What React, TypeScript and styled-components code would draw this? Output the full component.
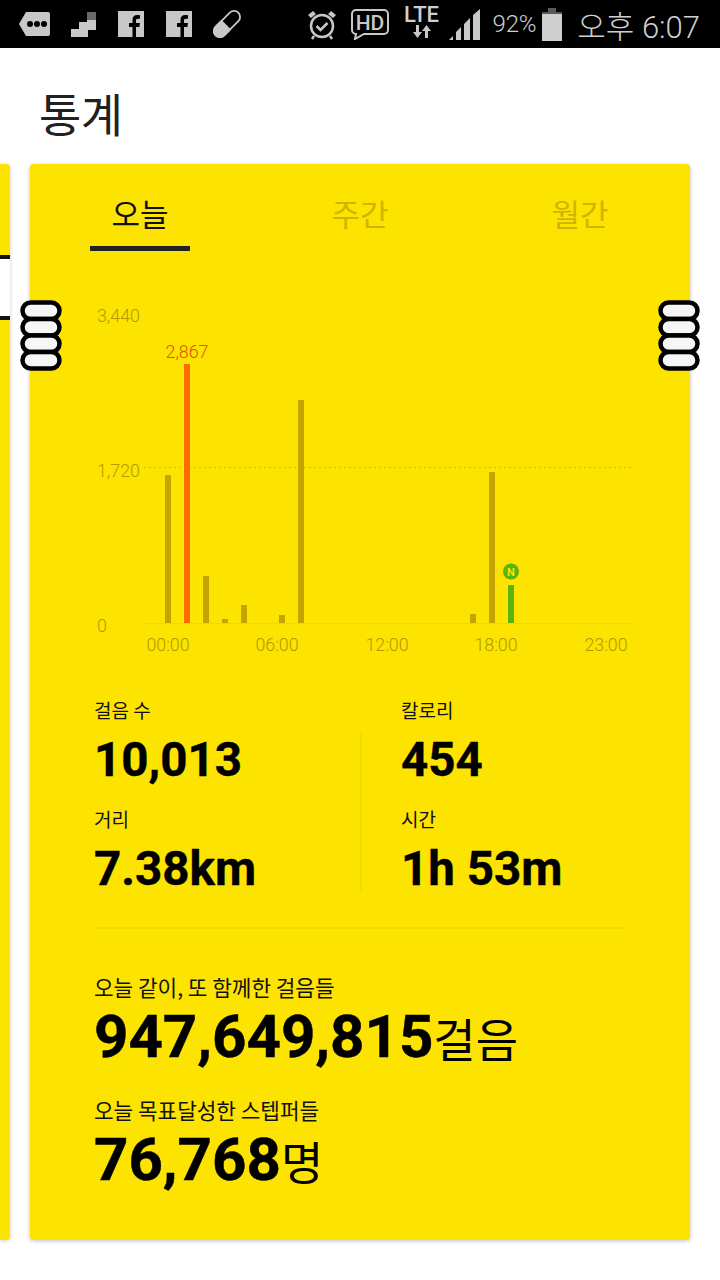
import React from 'react';
import styled, { createGlobalStyle } from 'styled-components';

const YELLOW = '#fce300';
const MUTED = '#c4a500';
const KR = '"Noto Sans CJK KR", "Noto Sans", sans-serif';

const GlobalStyle = createGlobalStyle`
  html, body {
    margin: 0;
    padding: 0;
    background: #ffffff;
  }
  body {
    width: 720px;
    height: 1280px;
    overflow: hidden;
    font-family: Roboto, ${KR};
  }
`;

const Page = styled.div`
  position: relative;
  width: 720px;
  height: 1280px;
  background: #ffffff;
  overflow: hidden;
`;

const StatusBar = styled.div`
  height: 48px;
  background: #000000;
  display: flex;
  align-items: center;
  justify-content: space-between;
  padding: 0 20px 0 19px;
  color: #cfcfcf;
`;

const StatusGroup = styled.div`
  display: flex;
  align-items: center;
`;

const BatteryText = styled.span`
  font: 300 24px Roboto, sans-serif;
  margin: 0 6px 0 12px;
  letter-spacing: -0.2px;
`;

const ClockText = styled.span`
  font: 300 31px Roboto, ${KR};
  margin-left: 15px;
  white-space: nowrap;
`;

const LteBox = styled.div`
  display: flex;
  flex-direction: column;
  align-items: center;
  width: 36px;
  margin-left: 15px;
  margin-right: 9px;
`;

const LteText = styled.span`
  font: 500 22px/18px Roboto, sans-serif;
  margin-top: -3px;
`;

const Title = styled.h1`
  margin: 0;
  height: 116px;
  padding: 32px 0 0 39px;
  box-sizing: border-box;
  font: 400 46px/64px ${KR};
  color: #212121;
  letter-spacing: -0.5px;
`;

const Carousel = styled.div`
  display: flex;
  gap: 20px;
`;

const PeekCard = styled.div`
  width: 10px;
  height: 1076px;
  background: ${YELLOW};
  border-radius: 0 4px 4px 0;
  box-shadow: 0 1px 4px rgba(0, 0, 0, 0.2);
  padding-top: 91px;
  box-sizing: border-box;
`;

const PeekInset = styled.div`
  height: 65px;
  box-sizing: border-box;
  background: #ffffff;
  border-top: 4px solid #111;
  border-bottom: 4px solid #111;
`;

const Card = styled.main`
  width: 660px;
  height: 1076px;
  background: ${YELLOW};
  border-radius: 4px;
  box-shadow: 0 1px 4px rgba(0, 0, 0, 0.25);
`;

const Tabs = styled.div`
  display: flex;
  justify-content: space-between;
  padding: 0 60px;
  height: 87px;
`;

const Tab = styled.div<{ $active?: boolean }>`
  width: 100px;
  height: 87px;
  box-sizing: border-box;
  padding-top: 24px;
  text-align: center;
  font: 400 31px/50px ${KR};
  color: ${(p) => (p.$active ? '#111' : '#d0b400')};
  border-bottom: 5px solid ${(p) => (p.$active ? '#222' : 'transparent')};
`;

const ChartSvg = styled.svg`
  display: block;
  width: 660px;
  height: 400px;
  margin-top: 19px;
`;

const StatsGrid = styled.section`
  margin: 26px 63px 0 64px;
  display: grid;
  grid-template-columns: 266px 1fr;
  height: 231px;
  border-bottom: 2px solid #f3da00;
`;

const StatsColumn = styled.div<{ $divider?: boolean }>`
  padding-left: ${(p) => (p.$divider ? '41px' : '0')};
  position: relative;

  &::before {
    content: '';
    display: ${(p) => (p.$divider ? 'block' : 'none')};
    position: absolute;
    left: 0;
    top: 37px;
    height: 158px;
    width: 2px;
    background: #f3da00;
  }
`;

const Stat = styled.div`
  height: 109px;
`;

const Label = styled.div`
  font: 400 19px/28px ${KR};
  color: #111;
`;

const TotalLabel = styled.div`
  font: 400 21.3px/30px ${KR};
  color: #111;
  margin-top: -1px;
`;

const StatValue = styled.div`
  font: 700 47.5px/56px Roboto, sans-serif;
  color: #000;
  margin-top: 8px;
  -webkit-text-stroke: 0.4px #000;
`;

const Totals = styled.section`
  padding: 44px 0 0 64px;
`;

const Total = styled.div`
  height: 124px;
`;

const TotalValue = styled.div`
  display: flex;
  align-items: baseline;
  font: 700 60px/68px Roboto, sans-serif;
  color: #000;
  margin-top: 1px;
  -webkit-text-stroke: 0.5px #000;
`;

const Unit = styled.span`
  font: 400 46px/68px ${KR};
  -webkit-text-stroke: 0;
`;

const RingWrap = styled.svg<{ $side: 'left' | 'right' }>`
  position: absolute;
  top: 300px;
  left: ${(p) => (p.$side === 'left' ? '20px' : '658px')};
  width: 42px;
  height: 71px;
`;

const bars = [
  { x: 165, top: 475 },
  { x: 184, top: 364, color: '#ff6a00' },
  { x: 203, top: 576 },
  { x: 222, top: 619 },
  { x: 241, top: 605 },
  { x: 279, top: 615 },
  { x: 298, top: 400 },
  { x: 470, top: 614 },
  { x: 489, top: 472 },
  { x: 508, top: 585, color: '#5cb30c' },
];

const hours = [
  { label: '00:00', x: 168 },
  { label: '06:00', x: 277 },
  { label: '12:00', x: 387 },
  { label: '18:00', x: 496 },
  { label: '23:00', x: 606 },
];

const Rings = ({ side }: { side: 'left' | 'right' }) => (
  <RingWrap $side={side} viewBox="0 0 42 71">
    {[0, 1, 2, 3].map((i) => (
      <rect
        key={i}
        x="2.5"
        y={2.5 + i * 16.5}
        width="37"
        height="16.5"
        rx="8.2"
        fill="#f6f6f6"
        stroke="#000"
        strokeWidth="4.5"
      />
    ))}
  </RingWrap>
);

const FacebookIcon = ({ ml }: { ml: number }) => (
  <svg width="26" height="26" viewBox="0 0 26 26" style={{ marginLeft: ml }}>
    <path
      fill="#c8c8c8"
      d="M0 0h26v26h-8v-10h3.4l.5-4H18v-2.3c0-1.2.4-1.9 2-1.9h2V4.300c-.5-.1-1.600-.2-2.800-.2-2.900 0-4.700 1.700-4.700 4.900V12H11v4h3.500v10H0z"
    />
  </svg>
);

const StatusIcons = () => (
  <StatusGroup>
    <svg width="31" height="24" viewBox="0 0 31 24">
      <path fill="#c8c8c8" d="M7 0h22a2 2 0 0 1 2 2v20a2 2 0 0 1-2 2H7L0 12z" />
      <circle cx="11" cy="12" r="3" fill="#000" />
      <circle cx="18" cy="12" r="3" fill="#000" />
      <circle cx="25" cy="12" r="3" fill="#000" />
    </svg>
    <svg width="25" height="25" viewBox="0 0 25 25" style={{ marginLeft: 21 }}>
      <path fill="#c8c8c8" d="M0 17h8v-7h8V3h9v15h-8v7H0z" />
      <rect x="16" y="0" width="9" height="8" fill="#6a6a6a" />
    </svg>
    <FacebookIcon ml={22} />
    <FacebookIcon ml={22} />
    <svg width="28" height="28" viewBox="0 0 28 28" style={{ marginLeft: 21 }}>
      <g transform="rotate(-45 14 14)">
        <rect x="-2" y="8" width="32" height="12" rx="6" fill="none" stroke="#c8c8c8" strokeWidth="1.800" />
        <path fill="#c8c8c8" d="M13 7h-9a7 7 0 0 0 0 14h9z" />
      </g>
    </svg>
  </StatusGroup>
);

const SystemIcons = () => (
  <StatusGroup>
    <svg width="30" height="31" viewBox="0 0 30 31">
      <circle cx="15" cy="17" r="11" fill="none" stroke="#c8c8c8" strokeWidth="2.500" />
      <path d="M9.500 17l4 4 7-7" fill="none" stroke="#c8c8c8" strokeWidth="2.500" />
      <path d="M1 6l5-4 3 3-5 4zM29 6l-5-4-3 3 5 4z" fill="#c8c8c8" />
      <path d="M7 27l-2 3M23 27l2 3" stroke="#c8c8c8" strokeWidth="2.500" />
    </svg>
    <svg width="38" height="32" viewBox="0 0 38 32" style={{ marginLeft: 14 }}>
      <path
        d="M5 2h28a4 4 0 0 1 4 4v16a4 4 0 0 1-4 4H13l-9 5 1-5a4 4 0 0 1-4-4V6a4 4 0 0 1 4-4z"
        fill="none"
        stroke="#c8c8c8"
        strokeWidth="2"
      />
      <text x="19" y="22" textAnchor="middle" fontFamily="Roboto" fontWeight="500" fontSize="21" fill="#c8c8c8">
        HD
      </text>
    </svg>
    <LteBox>
      <LteText>LTE</LteText>
      <svg width="20" height="15" viewBox="0 0 20 15">
        <path fill="#c8c8c8" d="M4 1h3v7h3l-4.500 6L1 8h3zM13 14h3V7h3l-4.500-6L10 7h3z" />
      </svg>
    </LteBox>
    <svg width="32" height="32" viewBox="0 0 32 32">
      <path fill="#c8c8c8" d="M0 32l4-4v4zM7 32v-8l5-5v13zM15 32V16l6-6v22zM24 32V7l7-6v31z" />
    </svg>
    <BatteryText>92%</BatteryText>
    <svg width="20" height="33" viewBox="0 0 20 33">
      <rect x="6" y="0" width="8" height="4" fill="#5a5a5a" />
      <rect x="0" y="4" width="20" height="5" fill="#5a5a5a" />
      <rect x="0" y="6" width="20" height="27" fill="#cfcfcf" />
    </svg>
    <ClockText>오후 6:07</ClockText>
  </StatusGroup>
);

// chart coordinates are page pixels, the viewBox moves them into the card
const Chart = () => (
  <ChartSvg viewBox="30 270 660 400">
    <line x1="144" x2="631" y1="467.500" y2="467.500" stroke="#dcc200" strokeWidth="1.500" strokeDasharray="2 3" />
    <line x1="144" x2="631" y1="623.500" y2="623.500" stroke="#f0d700" />
    {bars.map((b) => (
      <rect key={b.x} x={b.x} y={b.top} width="6" height={623 - b.top} fill={b.color ?? MUTED} />
    ))}
    <g fontFamily="Roboto" fontWeight="300" fontSize="17.800" fill="#b39800">
      <text x="97" y="322">3,440</text>
      <text x="97" y="477">1,720</text>
      <text x="97" y="632">0</text>
      {hours.map((h) => (
        <text key={h.label} x={h.x} y="651" textAnchor="middle">
          {h.label}
        </text>
      ))}
    </g>
    <text x="187" y="358" textAnchor="middle" fontFamily="Roboto" fontWeight="300" fontSize="17.800" fill="#d9560a">
      2,867
    </text>
    <circle cx="511" cy="571.500" r="8" fill="#5cb30c" />
    <text x="511" y="575.500" textAnchor="middle" fontFamily="Roboto" fontWeight="700" fontSize="11" fill={YELLOW}>
      N
    </text>
  </ChartSvg>
);

export default function App() {
  return (
    <Page>
      <GlobalStyle />
      <StatusBar>
        <StatusIcons />
        <SystemIcons />
      </StatusBar>
      <Title>통계</Title>
      <Carousel>
        <PeekCard>
          <PeekInset />
        </PeekCard>
        <Card>
          <Tabs>
            <Tab $active>오늘</Tab>
            <Tab>주간</Tab>
            <Tab>월간</Tab>
          </Tabs>
          <Chart />
          <StatsGrid>
            <StatsColumn>
              <Stat>
                <Label>걸음 수</Label>
                <StatValue>10,013</StatValue>
              </Stat>
              <Stat>
                <Label>거리</Label>
                <StatValue>7.38km</StatValue>
              </Stat>
            </StatsColumn>
            <StatsColumn $divider>
              <Stat>
                <Label>칼로리</Label>
                <StatValue>454</StatValue>
              </Stat>
              <Stat>
                <Label>시간</Label>
                <StatValue>1h 53m</StatValue>
              </Stat>
            </StatsColumn>
          </StatsGrid>
          <Totals>
            <Total>
              <TotalLabel>오늘 같이, 또 함께한 걸음들</TotalLabel>
              <TotalValue>
                947,649,815<Unit>걸음</Unit>
              </TotalValue>
            </Total>
            <Total>
              <TotalLabel>오늘 목표달성한 스텝퍼들</TotalLabel>
              <TotalValue>
                76,768<Unit>명</Unit>
              </TotalValue>
            </Total>
          </Totals>
        </Card>
      </Carousel>
      <Rings side="left" />
      <Rings side="right" />
    </Page>
  );
}
